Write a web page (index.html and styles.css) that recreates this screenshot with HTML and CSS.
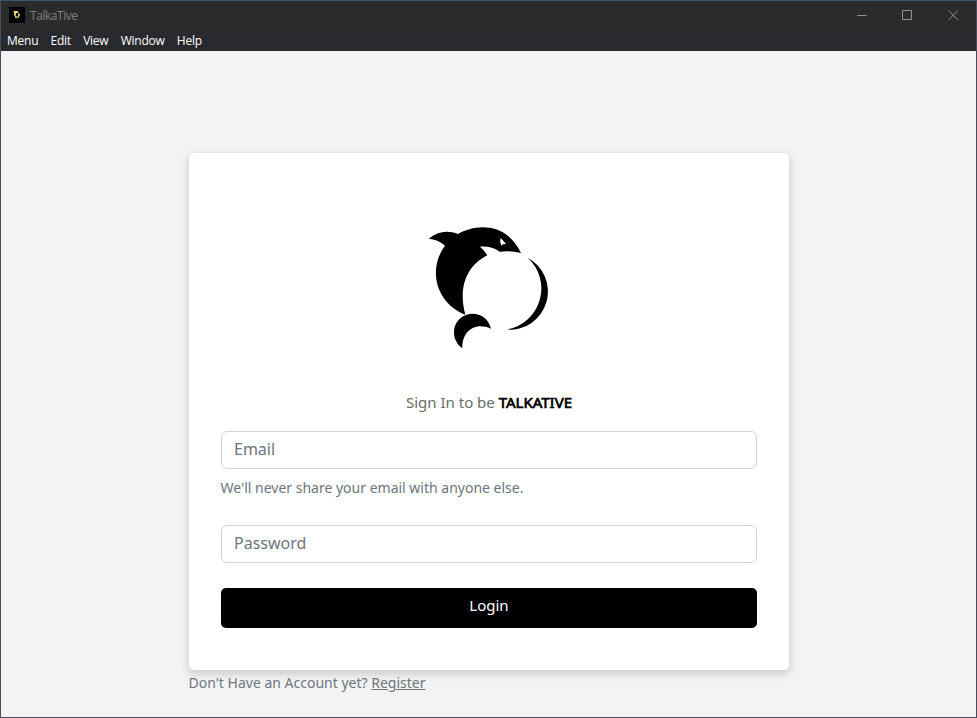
FILE: index.html
```html
<!DOCTYPE html>
<html lang="en">
<head>
<meta charset="utf-8">
<title>TalkaTive</title>
<link rel="stylesheet" href="styles.css">
</head>
<body>
<div class="window">
  <header class="titlebar">
    <svg class="app-icon" width="16" height="16" viewBox="0 0 16 16"><rect width="16" height="16"/><path d="M4 4.500 5.500 4H8.500l1 1.500-2.500.7-.4 2L8 9.500 7 12 6 9.500 5 7.500 5.300 5.500z" fill="#ffe08a"/><path d="M9.500 6.200q2.600 2.300-1 4.600 1.900-2.500 1-4.600z" fill="#ffe08a" stroke="#ffe08a" stroke-width=".7"/></svg>
    <span class="app-name">TalkaTive</span>
    <div class="controls">
      <svg width="46" height="29" viewBox="0 0 46 29"><path d="M18 14.500h10"/></svg>
      <svg width="46" height="29" viewBox="0 0 46 29"><path d="M17.500 9.500h9v9h-9z"/></svg>
      <svg width="46" height="29" viewBox="0 0 46 29"><path d="m17.500 9.500 9.500 9.500m0-9.500-9.500 9.500"/></svg>
    </div>
  </header>
  <nav class="menubar"><span>Menu</span><span>Edit</span><span>View</span><span>Window</span><span>Help</span></nav>
  <main class="page">
    <form class="card">
      <svg class="logo" width="136" height="136" viewBox="0 0 408 408">
        <path d="M26 56C52 34 83 29 114 42C165 12 258 4 303 99Q269 91 239 95C221 82 202 78 180 80Q193 91 202 106C142 135 113 202 136 284C48 250 22 148 75 77Q54 58 26 56Z"/>
        <path d="M323 113A115 115 0 0 1 259 329A125 125 0 0 0 323 113Z"/>
        <path d="M127 385C84 353 98 285 156 281Q201 282 213 326C165 305 126 333 127 385Z"/>
        <path class="eye" d="M242 54Q250 62 258 72L249 73L244 77Q238 66 242 54Z"/>
      </svg>
      <p class="headline">Sign In to be <strong>TALKATIVE</strong></p>
      <input class="field" type="email" placeholder="Email">
      <p class="hint">We'll never share your email with anyone else.</p>
      <input class="field" type="password" placeholder="Password">
      <button class="login" type="button">Login</button>
    </form>
    <p class="signup">Don't Have an Account yet? <a href="#">Register</a></p>
  </main>
</div>
</body>
</html>
```
FILE: styles.css
```css
* { box-sizing: border-box; }
body { margin: 0; font-family: "Noto Sans", sans-serif; }
p { margin: 0; }
.window {
  height: 718px;
  border: 1px solid #4b4c5b;
  border-top-color: #40566b;
  background: #f3f3f3;
  display: flex;
  flex-direction: column;
  overflow: hidden;
}
.titlebar {
  height: 30px;
  flex: none;
  display: flex;
  align-items: flex-start;
  background: #2b2b2b;
  padding-left: 8px;
}
.app-icon { margin-top: 6px; }
.app-name {
  margin-left: 5px;
  font: 12px/30px "Open Sans", sans-serif;
  letter-spacing: -.45px;
  color: #808080;
}
.controls { display: flex; margin: 0 -1px 0 auto; }
.controls svg { fill: none; stroke: #929292; }
.menubar {
  height: 20px;
  flex: none;
  display: flex;
  gap: 12.300px;
  padding-left: 6px;
  background: #292a2d;
  color: #fff;
  font: 12px/20px "Open Sans", sans-serif;
  letter-spacing: -.25px;
}
.page { padding: 102px 0 0 188px; }
.card {
  width: 600px;
  height: 517px;
  padding: 67px 32px 0;
  background: #fff;
  border-radius: 5px;
  box-shadow: 0 3px 10px rgba(0, 0, 0, .2);
  display: flex;
  flex-direction: column;
}
.logo { align-self: center; margin-left: -3px; }
.eye { fill: #fff; }
.headline {
  margin-top: 34px;
  height: 24px;
  line-height: 24px;
  font-size: 15px;
  text-align: center;
  color: #6c6c6c;
}
.headline strong {
  color: #000;
  font-weight: 400;
  -webkit-text-stroke: .7px #000;
}
.field {
  display: block;
  width: 100%;
  height: 38px;
  margin-top: 17px;
  padding: 0 12px 2px;
  border: 1px solid #ced4da;
  border-radius: 6px;
  background: #fff;
  font: 16px "Noto Sans", sans-serif;
}
.field::placeholder { color: #6c757d; opacity: 1; }
.hint {
  height: 21px;
  margin: 8px 0 10px -.5px;
  font-size: 14px;
  line-height: 21px;
  color: #6c757d;
}
.login {
  height: 40px;
  margin-top: 25px;
  padding: 0 0 6px;
  border: 0;
  border-radius: 5px;
  background: #000;
  color: #fff;
  font: 15px "Noto Sans", sans-serif;
}
.signup {
  margin: 2px 0 0 -.5px;
  font-size: 14px;
  line-height: 21px;
  color: #6c757d;
}
.signup a { color: inherit; }
```
